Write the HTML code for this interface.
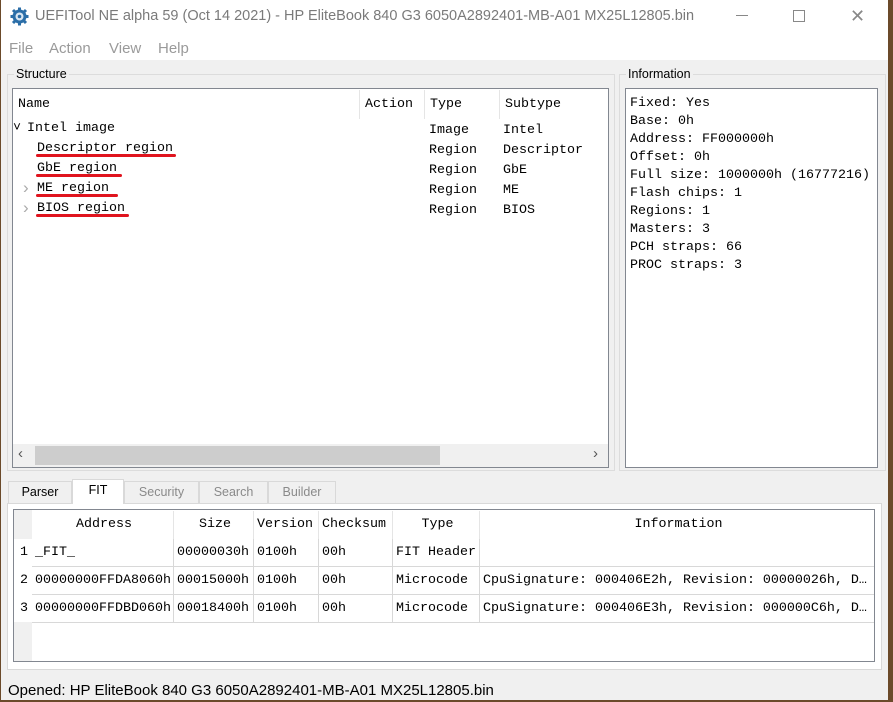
<!DOCTYPE html>
<html><head><style>
*{margin:0;padding:0;box-sizing:border-box}
body{width:893px;height:702px;overflow:hidden;background:#6b4a2a;position:relative;font-family:"Liberation Sans",sans-serif}
.win{position:absolute;left:1px;top:0;width:887px;height:700px;background:#f0f0f0}
.a{position:absolute}
.m{font-family:"Liberation Mono","DejaVu Sans Mono",monospace;font-size:13.33px;color:#000;white-space:pre}
.grp{position:absolute;border:1px solid #dcdcdc}
.lbl{position:absolute;background:#f0f0f0;font-size:12.5px;padding:0 2px;color:#000}
.box{position:absolute;background:#fff;border:1px solid #828790}
.hd{position:absolute;top:1px;height:29px;border-right:1px solid #e5e5e5;line-height:29px;padding-left:5px}
.ul{position:absolute;height:3px;background:#e0141e;border-radius:2px}
.tab{position:absolute;top:481px;height:22px;border:1px solid #d9d9d9;border-bottom:none;background:#f0f0f0;font-size:12.5px;color:#8a8a8a;text-align:center;line-height:21px}
.row{position:absolute;left:18px;width:842px;height:28px;border-bottom:1px solid #d8d8d8}
.c{position:absolute;top:0;height:100%;border-right:1px solid #d8d8d8;line-height:28px;padding-left:3px}
.mn{position:absolute;top:40px;font-size:15px;color:#9a9a9a}
</style></head><body>
<div class="win">
<div class="a" style="left:0;top:0;width:887px;height:60px;background:#fff"></div>
<svg class="a" style="left:9px;top:7px" width="19" height="19" viewBox="0 0 19 19"><circle cx="9.5" cy="9.5" r="7" fill="#2b6ea8"/><g stroke="#2b6ea8" stroke-width="3"><path d="M9.5 0.5v18M0.5 9.5h18M3 3l13 13M16 3L3 16"/></g><circle cx="9.5" cy="9.5" r="4" fill="#d9e6f2"/><circle cx="9.5" cy="9.5" r="1.8" fill="#2b6ea8"/></svg>
<div class="a" style="left:34px;top:8px;font-size:14.5px;color:#7a7a7a;white-space:nowrap">UEFITool NE alpha 59 (Oct 14 2021) - HP EliteBook 840 G3 6050A2892401-MB-A01 MX25L12805.bin</div>
<div class="a" style="left:735px;top:15px;width:12px;height:1px;background:#888"></div>
<div class="a" style="left:792px;top:10px;width:12px;height:12px;border:1px solid #888"></div>
<div class="a" style="left:849px;top:6px;font-size:18px;color:#888">✕</div>
<div class="mn" style="left:8px">File</div>
<div class="mn" style="left:48px">Action</div>
<div class="mn" style="left:108px">View</div>
<div class="mn" style="left:157px">Help</div>

<div class="grp" style="left:6px;top:74px;width:608px;height:397px"></div>
<div class="lbl" style="left:13px;top:67px">Structure</div>
<div class="box" style="left:11px;top:88px;width:597px;height:380px">
 <div class="hd m" style="left:0;width:347px">Name</div>
 <div class="hd m" style="left:347px;width:65px">Action</div>
 <div class="hd m" style="left:412px;width:75px">Type</div>
 <div class="hd m" style="left:487px;width:108px;border:none">Subtype</div>
 <div class="a m" style="left:0;top:32px">&#x2c5;</div>
 <div class="a m" style="left:14px;top:32px">Intel image</div>
 <div class="a m" style="left:24px;top:52px">Descriptor region</div>
 <div class="a m" style="left:24px;top:72px">GbE region</div>
 <div class="a" style="left:10px;top:89px;color:#aaa;font-size:17px">›</div><div class="a m" style="left:24px;top:92px">ME region</div>
 <div class="a" style="left:10px;top:109px;color:#aaa;font-size:17px">›</div><div class="a m" style="left:24px;top:112px">BIOS region</div>
 <div class="a m" style="left:416px;top:32px;line-height:20px">Image
Region
Region
Region
Region</div>
 <div class="a m" style="left:490px;top:32px;line-height:20px">Intel
Descriptor
GbE
ME
BIOS</div>
 <div class="ul" style="left:23px;top:65px;width:140px"></div>
 <div class="ul" style="left:23px;top:85px;width:86px"></div>
 <div class="ul" style="left:23px;top:105px;width:82px"></div>
 <div class="ul" style="left:23px;top:125px;width:93px"></div>
 <div class="a" style="left:0;top:355px;width:595px;height:23px;background:#f0f0f0"></div>
 <div class="a" style="left:22px;top:357px;width:405px;height:19px;background:#cdcdcd"></div>
 <div class="a" style="left:5px;top:356px;font-size:15px;color:#555">‹</div>
 <div class="a" style="left:580px;top:356px;font-size:15px;color:#555">›</div>
</div>

<div class="grp" style="left:618px;top:74px;width:267px;height:397px"></div>
<div class="lbl" style="left:625px;top:67px">Information</div>
<div class="box" style="left:624px;top:88px;width:253px;height:380px">
 <div class="a m" style="left:4px;top:6px;line-height:18px">Fixed: Yes
Base: 0h
Address: FF000000h
Offset: 0h
Full size: 1000000h (16777216)
Flash chips: 1
Regions: 1
Masters: 3
PCH straps: 66
PROC straps: 3</div>
</div>

<div class="tab" style="left:7px;width:64px;color:#000">Parser</div>
<div class="tab" style="left:71px;width:52px;top:479px;height:25px;background:#fff;color:#000;z-index:2">FIT</div>
<div class="tab" style="left:123px;width:75px">Security</div>
<div class="tab" style="left:198px;width:69px">Search</div>
<div class="tab" style="left:267px;width:68px">Builder</div>
<div class="a" style="left:6px;top:503px;width:875px;height:167px;background:#fff;border:1px solid #d9d9d9"></div>
<div class="a" style="left:12px;top:509px;width:862px;height:153px;background:#fff;border:1px solid #828790">
 <div class="a" style="left:0;top:0;width:18px;height:151px;background:#f0f0f0"></div>
 <div class="a" style="left:0;top:29px;width:18px;height:83px;background:#fff"></div>
 <div class="row m" style="top:1px;height:29px;border:none">
  <div class="c" style="left:0;width:142px;text-align:center;border-color:#e5e5e5">Address</div>
  <div class="c" style="left:142px;width:80px;text-align:center;border-color:#e5e5e5">Size</div>
  <div class="c" style="left:222px;width:65px;border-color:#e5e5e5">Version</div>
  <div class="c" style="left:287px;width:74px;border-color:#e5e5e5">Checksum</div>
  <div class="c" style="left:361px;width:87px;text-align:center;border-color:#e5e5e5">Type</div>
  <div class="c" style="left:448px;width:394px;text-align:center;border:none">Information</div>
 </div>
 <div class="a m" style="left:6px;top:29px;line-height:28px">1
2
3</div>
 <div class="row m" style="top:29px"><div class="c" style="left:0;width:142px">_FIT_</div><div class="c" style="left:142px;width:80px">00000030h</div><div class="c" style="left:222px;width:65px">0100h</div><div class="c" style="left:287px;width:74px">00h</div><div class="c" style="left:361px;width:87px">FIT Header</div></div>
 <div class="row m" style="top:57px"><div class="c" style="left:0;width:142px">00000000FFDA8060h</div><div class="c" style="left:142px;width:80px">00015000h</div><div class="c" style="left:222px;width:65px">0100h</div><div class="c" style="left:287px;width:74px">00h</div><div class="c" style="left:361px;width:87px">Microcode</div><div class="c" style="left:448px;width:394px;border:none">CpuSignature: 000406E2h, Revision: 00000026h, D…</div></div>
 <div class="row m" style="top:85px"><div class="c" style="left:0;width:142px">00000000FFDBD060h</div><div class="c" style="left:142px;width:80px">00018400h</div><div class="c" style="left:222px;width:65px">0100h</div><div class="c" style="left:287px;width:74px">00h</div><div class="c" style="left:361px;width:87px">Microcode</div><div class="c" style="left:448px;width:394px;border:none">CpuSignature: 000406E3h, Revision: 000000C6h, D…</div></div>
</div>
<div class="a" style="left:7px;top:682px;font-size:15px;color:#000;white-space:nowrap">Opened: HP EliteBook 840 G3 6050A2892401-MB-A01 MX25L12805.bin</div>
</div>
</body></html>
